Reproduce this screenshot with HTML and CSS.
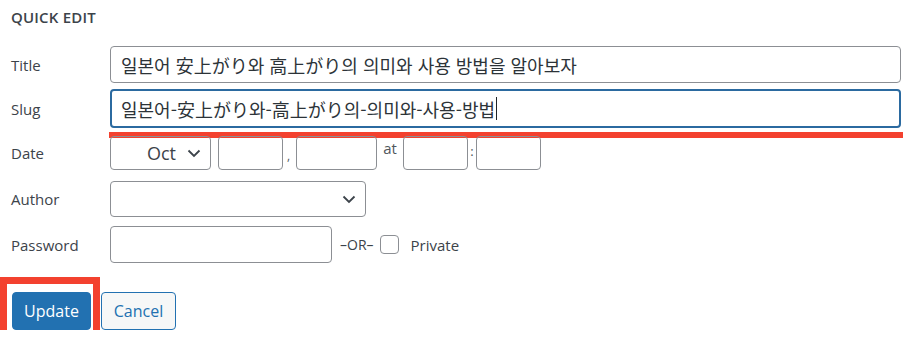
FILE: index.html
```html
<!DOCTYPE html>
<html lang="ko">
<head>
    <meta charset="UTF-8">
    <title>Quick Edit</title>
    <link rel="stylesheet" href="styles.css">
</head>
<body>
<div class="quick-edit">
    <h4>QUICK EDIT</h4>

    <div class="field">
        <label for="title">Title</label>
        <input type="text" id="title" class="text-input wide" value="일본어 安上がり와 高上がり의 의미와 사용 방법을 알아보자">
    </div>

    <div class="field slug-row">
        <label>Slug</label>
        <div class="text-input wide focused">일본어-安上がり와-高上がり의-의미와-사용-방법<span class="caret"></span></div>
    </div>

    <div class="field date-row">
        <label>Date</label>
        <div class="date-fields">
            <div class="fake-select month">
                <span>Oct</span>
                <svg width="14" height="9" viewBox="0 0 14 9"><path d="M1.5 1.5l5.5 5.5 5.5-5.5" fill="none" stroke="#3c434a" stroke-width="1.8"/></svg>
            </div>
            <div class="box day"></div>
            <span class="sep comma">,</span>
            <div class="box year"></div>
            <span class="sep at">at</span>
            <div class="box hour"></div>
            <span class="sep colon">:</span>
            <div class="box minute"></div>
        </div>
    </div>

    <div class="field author-row">
        <label>Author</label>
        <div class="fake-select author">
            <span></span>
            <svg width="14" height="9" viewBox="0 0 14 9"><path d="M1.5 1.5l5.5 5.5 5.5-5.5" fill="none" stroke="#3c434a" stroke-width="1.8"/></svg>
        </div>
    </div>

    <div class="field password-row">
        <label for="password">Password</label>
        <input type="text" id="password" class="text-input password">
        <span class="or">–OR–</span>
        <span class="checkbox"></span>
        <span class="private">Private</span>
    </div>

    <div class="actions">
        <span class="highlight">
            <button type="button" class="btn-primary">Update</button>
        </span>
        <button type="button" class="btn-secondary">Cancel</button>
    </div>
</div>
</body>
</html>
```

FILE: styles.css
```css
:root {
    --text-color: #3c434a;
    --border-color: #8c8f94;
    --blue: #2271b1;
    --mark-red: #f3412f;
}

* {
    box-sizing: border-box;
}

body {
    margin: 0;
    background: #fff;
    font-family: 'Open Sans', 'Noto Sans CJK KR', sans-serif;
    color: var(--text-color);
    overflow: hidden;
}

.quick-edit {
    padding: 7px 8px 0 11px;
}

h4 {
    margin: 0 0 18px 0;
    font-size: 15px;
    font-weight: 600;
    line-height: 21px;
    letter-spacing: 0.2px;
}

.field {
    display: flex;
    align-items: center;
    position: relative;
}

.field label {
    width: 99px;
    flex: none;
    font-size: 15px;
}

.text-input {
    height: 37px;
    border: 1px solid var(--border-color);
    border-radius: 4px;
    padding: 0 10px;
    font-family: 'Noto Sans CJK KR', 'Open Sans', sans-serif;
    font-size: 18px;
    color: #2c3338;
    background: #fff;
    outline: none;
}

.wide {
    flex: 1;
}

.slug-row {
    margin-top: 6px;
}

.focused {
    display: flex;
    align-items: center;
    height: 39px;
    border: 2px solid #2b6aa0;
    padding-left: 9px;
    white-space: nowrap;
}

.caret {
    display: inline-block;
    width: 1px;
    height: 23px;
    background: #1d2327;
    margin-left: 1px;
}

/* red annotation under slug */
.slug-row::after {
    content: '';
    position: absolute;
    left: 98px;
    right: -2px;
    top: calc(100% + 4px);
    height: 6px;
    background: var(--mark-red);
}

.date-row {
    margin-top: 8px;
}

.date-fields {
    display: flex;
    align-items: center;
    height: 34px;
}

.fake-select {
    display: flex;
    align-items: center;
    justify-content: flex-end;
    border: 1px solid var(--border-color);
    border-radius: 4px;
    padding: 0 9px 0 8px;
    gap: 11px;
    font-size: 18px;
}

.month {
    width: 101px;
    height: 34px;
}

.box {
    height: 34px;
    border: 1px solid var(--border-color);
    border-radius: 4px;
}

.day {
    width: 65px;
    margin-left: 7px;
}

.year {
    width: 81px;
}

.hour,
.minute {
    width: 65px;
}

.sep {
    font-size: 15px;
    color: #50575e;
}

.comma {
    width: 13px;
    padding-left: 4px;
    align-self: flex-end;
    padding-bottom: 6px;
    font-size: 12px;
}

.at {
    width: 26px;
    text-align: center;
    align-self: flex-start;
    padding-top: 2px;
}

.colon {
    width: 8px;
    text-align: center;
    align-self: flex-start;
    font-size: 13px;
    padding-top: 6px;
}

.author-row {
    margin-top: 11px;
}

.author {
    width: 256px;
    height: 36px;
}

.password-row {
    margin-top: 9px;
}

.password {
    width: 222px;
    height: 37px;
}

.or {
    margin-left: 8px;
    font-size: 14px;
}

.checkbox {
    width: 19px;
    height: 19px;
    margin-left: 6px;
    border: 1px solid var(--border-color);
    border-radius: 4px;
}

.private {
    margin-left: 12px;
    font-size: 15px;
}

.actions {
    display: flex;
    margin-top: 29px;
    padding-left: 1px;
}

.highlight {
    position: relative;
}

.highlight::before {
    content: '';
    position: absolute;
    left: -12px;
    top: -15px;
    right: -9px;
    bottom: -21px;
    border: 7px solid var(--mark-red);
}

.btn-primary,
.btn-secondary {
    height: 38px;
    border-radius: 4px;
    font-family: 'Open Sans', sans-serif;
    font-size: 16px;
    cursor: pointer;
}

.btn-primary {
    width: 79px;
    background: var(--blue);
    border: 1px solid var(--blue);
    color: #fff;
}

.btn-secondary {
    width: 75px;
    margin-left: 10px;
    background: #f6f7f7;
    border: 1px solid var(--blue);
    color: var(--blue);
}
```
